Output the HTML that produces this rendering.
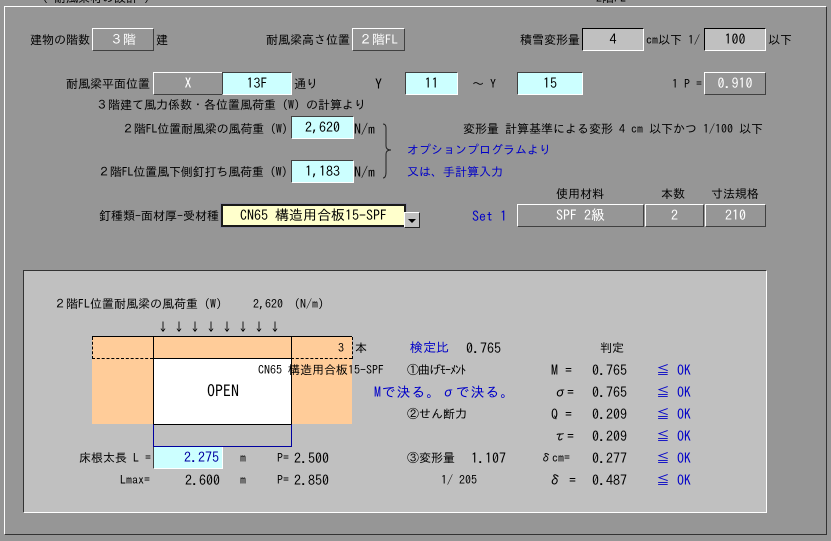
<!DOCTYPE html>
<html lang="ja"><head><meta charset="utf-8"><title>耐風梁</title>
<style>
html,body{margin:0;padding:0}
body{position:relative;width:831px;height:541px;overflow:hidden;background:#969696;font:12px/14px "IPAGothic","Liberation Mono","Noto Sans CJK JP",monospace;color:#000}
.t{position:absolute;white-space:pre}
.n{font-size:14px}
.b{color:#0000c8}
.a{position:absolute;box-sizing:border-box}
.box{position:absolute;box-sizing:border-box;text-align:center;white-space:pre;border:1px solid;line-height:21px;font-size:14px}
.r{background:#969696;color:#fff;border-color:#fff #404040 #404040 #fff}
.s{background:#c0c0c0;color:#000;border-color:#000 #fff #fff #000}
.c{background:#ccffff;color:#000;border-color:#404040 #fff #fff #404040}
</style></head><body>
<div class="a" style="left:4px;top:6px;width:823px;height:529px;border:1px solid;border-color:#fff #333 #333 #fff"></div>
<div class="t" style="left:36px;top:-9px">（ 耐風梁材の設計 ）</div>
<div class="t" style="left:596px;top:-9px">2階FL</div>

<div class="t" style="left:30px;top:33px">建物の階数</div>
<div class="box r" style="left:92px;top:28px;width:62px;height:23px;font-size:13px">３階</div>
<div class="t" style="left:156px;top:33px">建</div>
<div class="t" style="left:266px;top:33px">耐風梁高さ位置</div>
<div class="box r" style="left:352px;top:28px;width:53px;height:23px;font-size:13px">２階FL</div>
<div class="t" style="left:520px;top:33px">積雪変形量</div>
<div class="box s" style="left:582px;top:28px;width:62px;height:23px">4</div>
<div class="t" style="left:646px;top:33px">cm以下 1/</div>
<div class="box s" style="left:704px;top:28px;width:62px;height:23px">100</div>
<div class="t" style="left:768px;top:33px">以下</div>

<div class="t" style="left:66px;top:77px">耐風梁平面位置</div>
<div class="box r" style="left:153px;top:72px;width:70px;height:23px">X</div>
<div class="box c" style="left:222px;top:72px;width:70px;height:23px">13F</div>
<div class="t" style="left:294px;top:77px">通り</div>
<div class="t n" style="left:375px;top:77px">Y</div>
<div class="box c" style="left:405px;top:72px;width:53px;height:23px">11</div>
<div class="t" style="left:472px;top:77px">～ Y</div>
<div class="box c" style="left:517px;top:72px;width:66px;height:23px">15</div>
<div class="t" style="left:672px;top:77px">1 P =</div>
<div class="box r" style="left:704px;top:72px;width:62px;height:23px">0.910</div>

<div class="t" style="left:96px;top:98px">３階建て風力係数・各位置風荷重（W）の計算より</div>
<div class="t" style="left:122px;top:122px;letter-spacing:-.15px">２階FL位置耐風梁の風荷重（W）</div>
<div class="box c" style="left:291px;top:116px;width:63px;height:23px">2,620</div>
<div class="t n" style="left:354px;top:122px">N/m</div>
<div class="t" style="left:98px;top:165px;letter-spacing:-.15px">２階FL位置風下側釘打ち風荷重（W）</div>
<div class="box c" style="left:291px;top:160px;width:63px;height:23px">1,183</div>
<div class="t n" style="left:354px;top:165px">N/m</div>
<svg class="a" style="left:380px;top:122px" width="16" height="58" viewBox="0 0 16 58"><path d="M3 2 Q6 2 6 6 V24 Q6 28 11 28 Q6 28 6 32 V50 Q6 56 3 56" fill="none" stroke="#222" stroke-width="1"/></svg>

<div class="t" style="left:463px;top:122px">変形量 計算基準による変形 4 cm 以下かつ 1/100 以下</div>
<div class="t b" style="left:407px;top:143px">オプションプログラムより</div>
<div class="t b" style="left:407px;top:165px">又は、手計算入力</div>

<div class="t" style="left:99px;top:209px">釘種類-面材厚-受材種</div>
<div class="a" style="left:221px;top:204px;width:185px;height:23px;background:#ffffcc;border:2px solid #1a1a1a;outline:1px solid #8a8a9a;text-align:center;line-height:19px;font-size:14px;white-space:pre">CN65 構造用合板15-SPF</div>
<div class="a" style="left:404px;top:212px;width:16px;height:16px;background:#c0c0c0;border:1px solid;border-color:#fff #222 #222 #fff"><div class="a" style="left:3px;top:6px;width:0;height:0;border:4px solid transparent;border-top:4px solid #000"></div></div>

<div class="t" style="left:556px;top:187px">使用材料</div>
<div class="t" style="left:661px;top:187px">本数</div>
<div class="t" style="left:711px;top:187px">寸法規格</div>
<div class="t b n" style="left:472px;top:209px">Set 1</div>
<div class="box r" style="left:517px;top:204px;width:127px;height:23px">SPF 2級</div>
<div class="box r" style="left:645px;top:204px;width:59px;height:23px">2</div>
<div class="box r" style="left:705px;top:204px;width:61px;height:23px">210</div>

<!-- lower panel -->
<div class="a" style="left:23px;top:270px;width:744px;height:243px;background:#c0c0c0;border:1px solid;border-color:#333 #fff #fff #333"></div>
<div class="t" style="left:54px;top:297px">２階FL位置耐風梁の風荷重（W）</div>
<div class="t" style="left:253px;top:297px">2,620</div>
<div class="t" style="left:294px;top:297px">(N/m)</div>
<div class="t" style="left:157px;top:320px;letter-spacing:4px">↓↓↓↓↓↓↓↓</div>

<div class="a" style="left:92px;top:336px;width:260px;height:88px;background:#ffcc99"></div>
<div class="a" style="left:92px;top:336px;width:260px;height:1px;background:#000"></div>
<div class="a" style="left:92px;top:337px;width:0;height:22px;border-left:1px dashed #000"></div>
<div class="a" style="left:352px;top:337px;width:0;height:22px;border-left:1px dashed #000"></div>
<div class="a" style="left:92px;top:358px;width:61px;height:0;border-top:1px dashed #000"></div>
<div class="a" style="left:291px;top:358px;width:61px;height:0;border-top:1px dashed #000"></div>
<div class="a" style="left:153px;top:336px;width:139px;height:89px;border:1px solid #000;background:#ffcc99"></div>
<div class="a" style="left:153px;top:358px;width:139px;height:67px;border:1px solid #000;background:#fff"></div>
<div class="a" style="left:153px;top:424px;width:139px;height:23px;border:1px solid #0000a0;border-top-color:#000"></div>
<div class="t" style="left:338px;top:341px">3</div>
<div class="t" style="left:355px;top:341px">本</div>
<div class="t" style="left:258px;top:363px">CN65 構造用合板15-SPF</div>
<div class="t" style="left:207px;top:384px;font-size:16px">OPEN</div>

<div class="t" style="left:79px;top:451px">床根太長 L =</div>
<div class="a" style="left:153px;top:447px;width:70px;height:22px;background:#ccffff;border-left:1px solid #404040;border-right:1px solid #fff;border-bottom:1px solid #fff;color:#0000a0;text-align:right;padding-right:3px;line-height:21px;font-size:14px">2.275</div>
<div class="t" style="left:240px;top:451px">m</div>
<div class="t" style="left:277px;top:451px">P=</div>
<div class="t n" style="left:294px;top:451px">2.500</div>
<div class="t" style="left:120px;top:473px">Lmax=</div>
<div class="t n" style="left:185px;top:473px">2.600</div>
<div class="t" style="left:240px;top:473px">m</div>
<div class="t" style="left:277px;top:473px">P=</div>
<div class="t n" style="left:294px;top:473px">2.850</div>

<div class="t b" style="left:410px;top:341px;font-size:13px">検定比</div>
<div class="t n" style="left:466px;top:341px">0.765</div>
<div class="t" style="left:600px;top:341px">判定</div>

<div class="t" style="left:407px;top:363px;letter-spacing:-1px">①曲げﾓｰﾒﾝﾄ</div>
<div class="t b" style="left:374px;top:385px;font-size:14px;letter-spacing:.8px">Mで決る。σで決る。</div>
<div class="t" style="left:407px;top:407px">②せん断力</div>
<div class="t" style="left:407px;top:451px">③変形量</div>
<div class="t n" style="left:471px;top:451px">1.107</div>
<div class="t" style="left:441px;top:473px">1/ 205</div>

<div class="t n" style="left:551px;top:363px">M =</div>
<div class="t n" style="left:553px;top:385px">σ=</div>
<div class="t n" style="left:551px;top:407px">Q =</div>
<div class="t n" style="left:553px;top:429px">τ=</div>
<div class="t" style="left:540px;top:451px">δcm=</div>
<div class="t n" style="left:548px;top:473px">δ =</div>

<div class="t n" style="left:592px;top:363px">0.765</div>
<div class="t n" style="left:592px;top:385px">0.765</div>
<div class="t n" style="left:592px;top:407px">0.209</div>
<div class="t n" style="left:592px;top:429px">0.209</div>
<div class="t n" style="left:592px;top:451px">0.277</div>
<div class="t n" style="left:592px;top:473px">0.487</div>

<div class="t b n" style="left:656px;top:363px">≦ OK</div>
<div class="t b n" style="left:656px;top:385px">≦ OK</div>
<div class="t b n" style="left:656px;top:407px">≦ OK</div>
<div class="t b n" style="left:656px;top:429px">≦ OK</div>
<div class="t b n" style="left:656px;top:451px">≦ OK</div>
<div class="t b n" style="left:656px;top:473px">≦ OK</div>
</body></html>
